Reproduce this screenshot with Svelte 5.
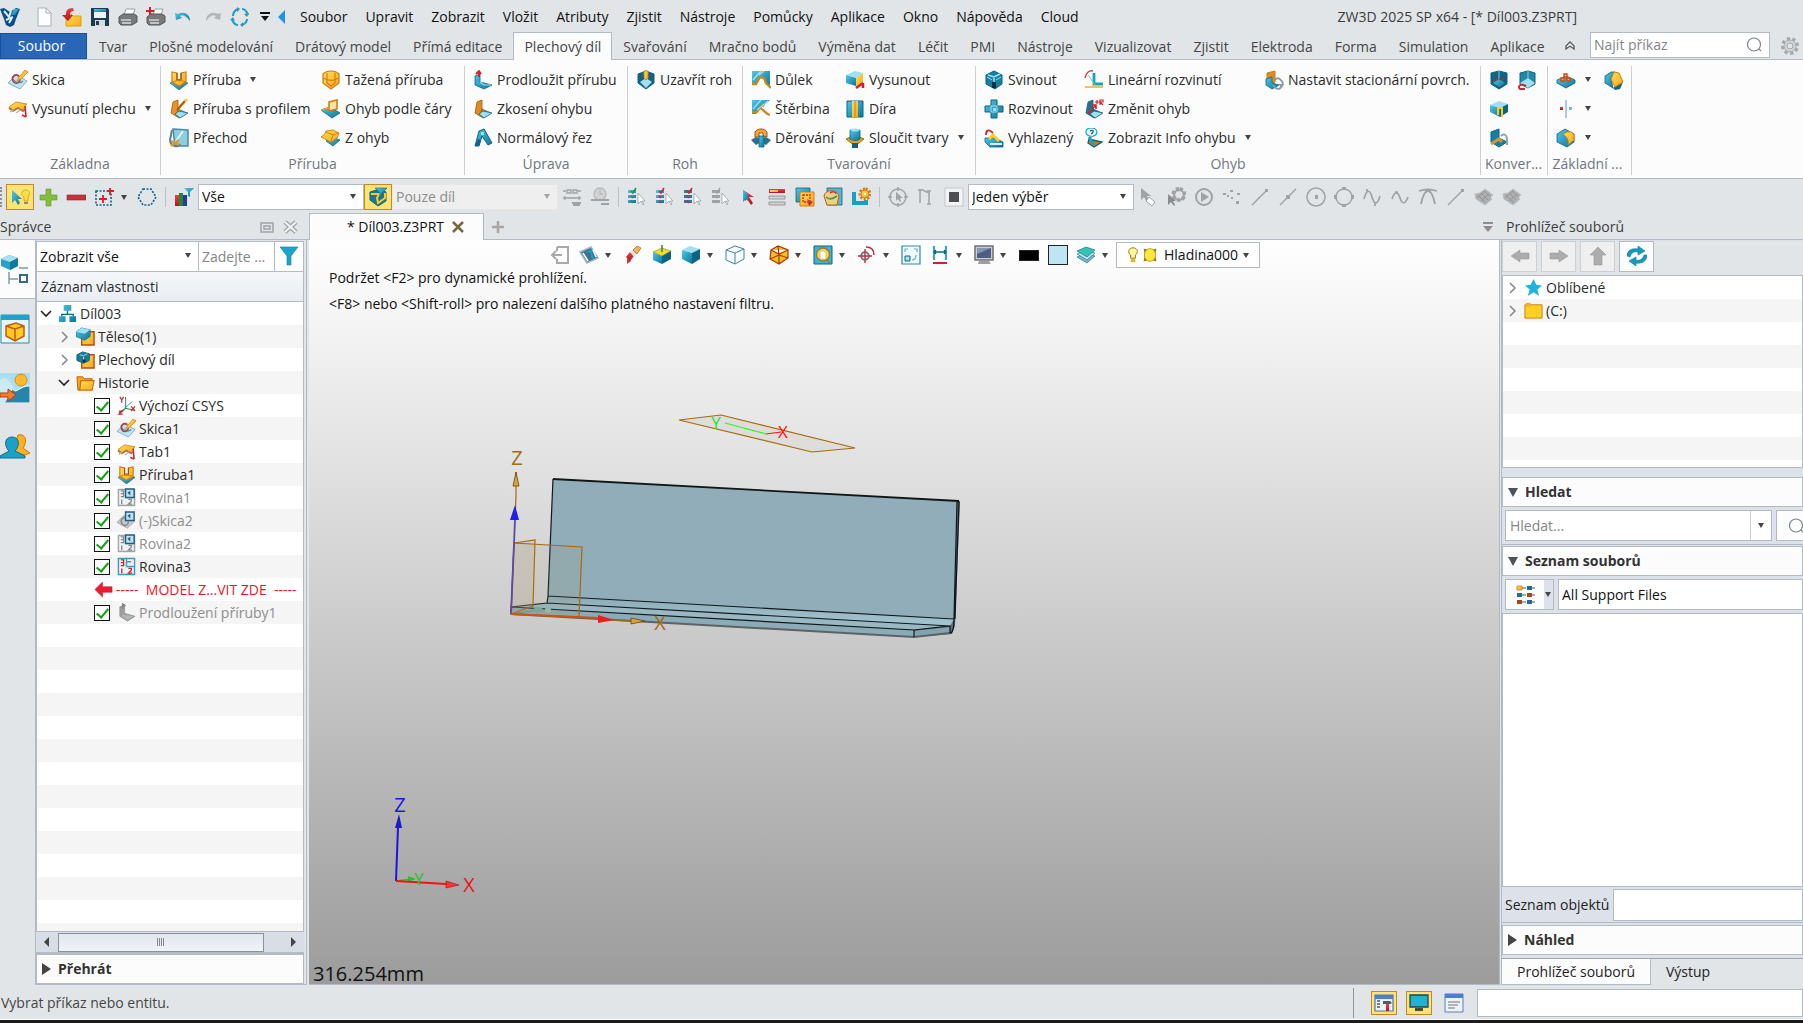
<script>
    // Shared icon colours
    const B = '#189fc8';
    const D = '#0b6486';
    const L = '#9fe0f4';
    const Y = '#ffc926';
    const O = '#d27a12';
    const R = '#d3202b';
    const G = '#a0a2a4';
    const K = '#55595d';
    const W = '#fbfdfe';

    // Flat fills that are drawn with a gradient
    const shades = { [B]: 'url(#blue)', [Y]: 'url(#yellow)', [R]: 'url(#red)' };

    // Each shape: [path, fill, stroke, stroke width]. All icons use a 20x20 box
    const cube = [
        ['M1 5L9 1l10 3-8 4z', L],
        ['M1 5l10 3v11l-10-5z', B],
        ['M11 8l8-4v10l-8 5z', D]
    ];
    const bulletList = (c, d) => [
        ['M1 3h8v3H1zM1 8h8v3H1zM1 13h8v3H1z', c],
        ['M4 4l2 2 3-5M4 9l2 2M4 14l2 2', 'none', d, 1.5],
        ['M11 6v11l3-3 2 4 1-1-2-3h3z', W, G, 0.8]
    ];
    const plane = (a, b) => [
        ['M1.500 1.500h17v17h-17z', '#eef4f6', a, 1.5],
        ['M10 1v9h9M10 5h5', 'none', a, 1.5],
        ['M4 3h3v3H4M7 6v3H4M5 12v5M12 12h3v2l-3 3h4', 'none', b, 1.4]
    ];
    const mesh = [
        ['M1 7l5-1 5-4 8 6-3 2 2 2-7 6L2 12z', '#aeb0b2', '#bcbec0', 1],
        ['M4 8l8 8M7 6l7 7M10 4l7 6M3 11l8-7M7 14l8-7', 'none', '#8f9193', 0.8]
    ];
    const sketch = [
        ['M0 13l8-8 11 6-7 8z', '#bfe4f2', '#7fb4ca', 1],
        ['M11 6c-4-3-8 1-6 5s7 2 7-2', 'none', '#b33a44', 1.6],
        ['M5 9c2 4 7 5 10 2', 'none', '#5f7f92', 1.2],
        ['M9 11l2-4 6-7 3 2-7 7z', Y, O, 0.8]
    ];
    const tab = [
        ['M1 8l7-5 11 2-5 6-5-2-3 3z', Y, O, 0.8],
        ['M1 9l4 3 5-3 5 3 2-2', 'none', '#a9744a', 1.8],
        ['M2 13l3-2M8 14l4-3', 'none', '#c9b8a0', 1.5],
        ['M17 7l1 11M14 16l4 2', 'none', R, 1.6]
    ];
    const flange = [
        ['M1 13l9-4 9 4-9 7z', B, D, 0.6],
        ['M3 2l5 1v7l2 1 2-1V3l5-1v10l-7 4-7-4z', Y, O, 1.2],
        ['M3 12l7-2 7 2', 'none', O, 1],
        ['M8 3v7M12 3v7', 'none', '#8a4a08', 1]
    ];
    const folder = [['M1 4h6l2 2h8v3H6L4 18H2z', '#f0a81e', '#b9600c', 1], ['M5 8h14l-2 10H4z', Y, '#c9700c', 1.2]];
    const lshape = (a, b) => [
        ['M4 3l5-2v9l9 4-8 5-8-5z', a, b, 0.8],
        ['M9 10l-1 4 4 3', 'none', b, 1],
        ['M10 12l9 2-8 5-5-4z', L, D, 0.8]
    ];

    const icons = {
        logo: [['M0 2l4-1 6 4 6-4 4 1-4 10-2 6-4 2-4-2-2-6z', '#0b4d83'], ['M4 4l5 6 2-6M6 13l7-3M9 16l3-5', 'none', '#d5edf8', 2], ['M11 8l3-6 5 0-4 6z', B]],
        page: [['M4 1h8l5 5v13H4z', W, '#a6adb3', 1], ['M12 1v5h5', 'none', '#a6adb3', 1]],
        open: [['M4 7h5l2 2h8v10H4z', Y, '#e0a000', 1], ['M11 1C4 1 4 5 4 8H0l6 6 5-6H8c0-3 1-4 4-4z', R]],
        save: [['M1 1h17l1 2v16H1z', '#1c3a52'], ['M4 2h12v9H4z', '#e9f4f9'], ['M4 2h12v3H4z', B], ['M5 13h10v6H5z', '#d8dde0'], ['M6 14h3v4H6z', '#1c3a52']],
        print: [['M6 8l2-6h9l-2 6z', W, '#9a9c9e', 1], ['M1 10l4-3h11l3 2v6l-5 3H3l-2-2z', '#77797b', '#55585b', 1], ['M3 12h10v2H3z', '#b9bbbd'], ['M4 16h9', 'none', '#dcdedf', 1.5]],
        printAdd: [['M7 8l2-6h8l-2 6z', W, '#9a9c9e', 1], ['M1 10l4-3h11l3 2v6l-5 3H3l-2-2z', '#77797b', '#55585b', 1], ['M3 12h10v2H3z', '#b9bbbd'], ['M4 16h9', 'none', '#dcdedf', 1.5], ['M4 0v8M0 4h8', 'none', R, 2]],
        undo: [['M1 6l1 7 6-2-2-2c3-2 6 0 10 5 0-7-6-10-12-7z', B]],
        redo: [['M19 6l-1 7-6-2 2-2c-3-2-6 0-10 5 0-7 6-10 12-7z', '#b3b6b9']],
        cycle: [['M3 9c0-4 3-7 6-7M12 2c3 0 5 3 6 6M17 12c0 3-3 6-6 6M8 18c-3 0-5-3-6-5', 'none', B, 2], ['M7 0l3 2-3 3zM19 6l-2 4-3-3zM13 20l-3-2 3-3z M0 13l3-3 2 4z', '#3c93b0']],
        sketch,
        tab,
        flange,
        profileFlange: [...lshape('#e99528', '#a05a08'), ['M8 11L16 2', 'none', '#b06010', 2.5], ['M16 2l2-2', 'none', Y, 3]],
        blend: [['M4 1l15 1v16H6z', '#8dcde0', '#4a8ba4', 1.5], ['M5 16L14 3', 'none', '#dff4fa', 2], ['M3 2L1 12c0 6 8 8 10 4', 'none', '#58809a', 2], ['M2 13l8 4M2 18l8-6', 'none', '#d39a3a', 2.2]],
        swept: [['M2 4c4-4 12-4 16 0v9l-8 6-8-6z', Y, O, 1.2], ['M6 3v10l4 3 4-3V3M2 8c5 3 11 3 16 0', 'none', O, 1.1]],
        lineBend: [['M0 11l9-3 10 6-8 5z', B, D, 0.8], ['M8 3l8-2v9l-8 2z', '#ffe4a0', O, 1.6], ['M0 11l8-2', 'none', '#e8a030', 1.6]],
        zBend: [['M5 13l6-4 8 3-7 6z', B, D, 0.8], ['M0 9l4-3 1-3 7-1 6 3-2 5-6 4-4-2z', Y, O, 0.9], ['M5 4l7 3 5-2M12 7l-2 6', 'none', O, 0.9]],
        extend: [['M2 6l5-2v8l12 3-8 4-9-4z', B, D, 0.8], ['M7 12l4 3 7 0', 'none', L, 1.2], ['M6 7V1M3 4l3-3 2 3', 'none', R, 1.8]],
        taper: lshape('#e08a20', '#9c5808'),
        normalCut: [['M2 18L6 3l5-2 8 14-4 2-6-9-3 10z', B, D, 1], ['M2 18l3-7 3 1-2 6z', D], ['M8 4h3v3H8z', L]],
        corner: [['M2 4l8-3 8 3v9l-8 6-8-6z', '#17617e', D, 1], ['M4 12l6-4 6 4-6 6z', L], ['M8 1h4v7l-2 2-2-2z', Y, O, 0.8]],
        dimple: [['M1 1h18v17L10 6 5 13H1z', B], ['M1 14h4l4-7 4 1 2 5 5 5', 'none', '#c48a1a', 2.4], ['M2 10l8-9M8 5l5-4', 'none', L, 1.5]],
        louver: [['M1 1h18L9 10l-4 5H1z', B], ['M1 13h5l5-7 2 1M8 9c4 0 6 6 11 7', 'none', '#c48a1a', 2.2], ['M2 10l8-9M6 11L17 2', 'none', L, 1.2]],
        punch: [['M0 12l5-3 5 2 5-2 5 3-5 5-5-3-5 3z', '#2d6f8c'], ['M4 9V4c2-4 10-4 12 0v5l-4-1V5H8v4z', '#f0a43a', '#a5570c', 1], ['M8 8h5v11H8z', B, D, 0.8]],
        extrude: [['M1 5l9-4 8 2-7 5z', L], ['M1 5l10 3v8L1 13z', B], ['M11 8l7-5v9l-7 5z', Y], ['M11 18l7-5M18 18v-5', 'none', R, 2.5]],
        hole: [['M2 2h16v16H2z', B, D, 1], ['M7 2h6v16H7z', Y], ['M10 2v16', 'none', O, 1]],
        merge: [['M1 11l9-4 9 4-9 7z', '#e6a21e', '#a9690c', 1], ['M5 2h10v9c-3 2-7 2-10 0z', B, D, 0.8], ['M7 15h6v5H7z', D], ['M5 2c3-2 7-2 10 0-3 2-7 2-10 0z', L]],
        fold: [['M2 5l8-4 8 4v9l-7 5-9-5z', '#17809f', D, 1], ['M4 5l6 2 6-3M10 8v4', 'none', L, 1.5], ['M3 7l5 3M17 7l-5 3', 'none', L, 1], ['M8 12h4v6H8z', '#0b3040']],
        unfold: [['M7 1h6v6h6v6h-6v6H7v-6H1V7h6z', B, D, 1], ['M7 7h6v6H7z', 'none', L, 1], ['M9 9h3v3H9z', L]],
        flatten: [['M1 10h10l8 4v5H6l-5-5z', B, D, 0.8], ['M5 11l4-4 6 6', 'none', Y, 3], ['M9 5C4 0 2 3 2 7', 'none', R, 1.8], ['M6 16h12', 'none', '#dfe9ee', 2]],
        linear: [['M10 3v11h9', 'none', B, 2.8], ['M1 17h18', 'none', '#f0c060', 2], ['M9 1C5 0 2 3 1 8', 'none', '#c44a50', 1.5], ['M4 5l7 10', 'none', '#a0b6c0', 1]],
        changeBend: [...lshape('#2a728f', D), ['M4 15l8-9M8 6h4v4', 'none', R, 1.6], ['M11 3h4M13 1v4M16 6V1h3v2h-3l3 3', 'none', R, 1.2]],
        bendInfo: [['M7 0c8 0 7 8 2 8l-3 2V8C0 7 1 0 7 0z', '#e8f6fc', B, 1.2], ['M6 3c3-2 5 1 1 3', 'none', D, 1.2], ['M5 11l4 1 9 2-8 5-6-4z', '#c87a1c', D, 1.3], ['M5 9l5 8', 'none', B, 2.5]],
        stationary: [['M3 3l8-2v11l-8 3z', '#e08a20', O, 1], ['M2 9l6-2v6l7 2-7 4-6-4z', B, D, 0.8], ['M11 10c3-4 7 0 8 4M9 15c3 5 8 5 8 1', 'none', '#8b9aa2', 1.8], ['M14 14h6l-2 4z', '#8b9aa2']],
        convA: [['M2 3l8-2 8 2v11l-8 5-8-5z', '#17617e', D, 1], ['M4 13l6-4 6 4-6 4z', B], ['M10 1v8', 'none', L, 0.8], ['M4 10l12-1', 'none', R, 1.4, '2 1']],
        convB: [['M3 3l8-2 7 2v11l-7 4-8-4z', '#2387a5', D, 1], ['M3 13l8-5 7 5-7 5z', L], ['M11 1v7', 'none', L, 0.8], ['M8 19H3c-3-3 1-6 6-3', 'none', R, 1.8]],
        convC: [['M1 6l9-4 9 3-8 4z', L], ['M1 6l10 3v9L1 13z', B], ['M11 9l8-4v8l-8 5z', D], ['M9 16V9h4v9', 'none', Y, 2]],
        convD: [['M2 4l8-3v9l8 4-8 5-8-5z', '#17809f', D, 1], ['M2 16l8-5 3 3', 'none', '#d9943a', 3], ['M12 8c3-3 6-1 6 3v6', 'none', '#8da6b1', 2]],
        bumps: [['M1 10l9-4 9 4v3l-9 5-9-5z', B, D, 0.8], ['M5 8h3v3H5zM11 8h3v3h-3zM8 4h3v3H8z', Y, '#d04a10', 1.4]],
        mirrorPts: [['M10 1v18', 'none', '#7fb9d3', 1.4], ['M4 8h3v3H4z', R], ['M13 8h3v3h-3z', '#6fc0da']],
        chamfer: [['M1 6l6-4 4 0-4 7 2 9-8-5z', B, D, 0.8], ['M9 18l10-6-3 7-5 1z', D], ['M10 2l5 1 4 9-8 5-4-8z', Y, O, 1]],
        fillet: [['M1 6l8-5 9 5v8l-7 5-10-5z', B, D, 0.8], ['M7 6c6-4 10-2 11 1v5l-6 5c1-5-1-8-5-11z', Y, O, 1]],
        // selection toolbar
        pick: [['M2 3v13l3-3 3 5 2-2-2-4h4z', B], ['M13 4c4-3 9 1 5 6v4h-4v-4c-3-2-3-4-1-6z', '#ffdf45', '#c99a20', 0.8], ['M14 16h4', 'none', '#888', 2]],
        plus: [['M8 2h5v6h6v5h-6v6H8v-6H2V8h6z', '#86bd3e', '#5f9723', 0.6]],
        minus: [['M1 8h19v5H1z', '#c9323a', '#951f27', 0.6]],
        boxAdd: [['M2 4h15v14H2z', 'none', D, 1.6, '2 1.500'], ['M9 8v8M5 12h8M16 1v7M13 4h7', 'none', R, 1.8]],
        lasso: [['M6 2h8l5 8-5 8H6l-5-8z', 'none', D, 1.6, '2 1.500']],
        histogram: [['M1 8h4v11H1z', R], ['M5 6h4v13H5z', '#1f8a34'], ['M9 8h4v11H9z', '#203c9e'], ['M10 1h10l-4 4v5l-2-1V5z', B]],
        partFilter: [['M2 5l10-3 6 3v9l-8 5-8-6z', '#1b7894', D, 1], ['M3 7h8l-2 4 1 5 7-5V6', 'none', Y, 2], ['M7 1h12l-5 5v4l-2-1V6z', B, D, 0.6]],
        refDim: [['M1 4h3M5 3h4v3H5zM11 3h4v3h-4zM15 4h4M1 11h18M3 9v4M17 9v4', 'none', G, 1.3], ['M10 16h9M11 18h7', 'none', G, 2]],
        refClock: [['M10 1a6 6 0 100 12 6 6 0 000-12M10 3v4h3', '#d1d3d5', '#b7b9bb', 1.3], ['M1 13h18M11 17h8', 'none', G, 2]],
        listOk: bulletList(B, '#1b9b3c'),
        listRed: bulletList(B, R),
        listBoth: bulletList('#31789a', R),
        listGray: bulletList(G, G),
        cursor: [['M4 3l11 7-5 0 4 6-2 2-4-6-2 2z', R], ['M4 3v12l3-3 2 2V7z', B]],
        menuList: [['M2 2h16v4H2z', R], ['M3 3h8v2H3z', Y], ['M2 9h16v3H2zM2 15h16v3H2z', '#d2d4d6', '#888', 0.8]],
        copyPick: [['M1 1h14v14H1z', B, D, 0.8], ['M5 5h14v14H5z', Y, O, 1], ['M8 8h7v7H8z', 'none', R, 1.3, '2 1'], ['M12 12l6 3-4 4z', R]],
        handPick: [['M4 1h15v17H4z', '#5fb2cc', D, 0.8], ['M1 9c1-7 13-7 15 0l-2 9H4z', '#f3cf83', '#a5691b', 1], ['M3 10c3 3 7 2 11-1', 'none', '#3e9a4c', 1.6], ['M7 6c2-2 6-1 6 1', 'none', R, 1.2]],
        gearPick: [['M3 5v11h12v-3', 'none', B, 4], ['M14 2a5 5 0 100 10 5 5 0 000-10', 'none', O, 3, '2 1.500'], ['M14 3a4 4 0 100 8 4 4 0 000-8', Y, O, 1], ['M13 6h2v2h-2z', W]],
        circleCursor: [['M10 2a8 8 0 100 16 8 8 0 000-16M10 0v4M10 16v4M0 10h4M16 10h4', 'none', G, 1.5], ['M8 5v9l2-2 2 3 1-1-1-3h3z', G]],
        polyPts: [['M4 16V3c4-2 6 4 9 2v12M2 3h4M11 4h4M11 17h4', 'none', G, 1.5]],
        square: [['M1 1h18v18H1z', '#f3f4f5', '#c3c5c7', 1], ['M5 5h10v10H5z', '#4d4f52']],
        cursorTag: [['M3 1v12l3-3 3 5 2-1-2-5h4z', G], ['M11 10l6 5-3 4-6-5z', W, G, 1]],
        gearCursor: [['M13 2a5 5 0 100 11 5 5 0 000-11', 'none', G, 4, '3 2'], ['M13 3a5 5 0 100 10 5 5 0 000-10', 'none', G, 2], ['M2 7v11l3-3 3 4 1-1-2-4h3z', '#8a8c8e']],
        play: [['M10 2a8 8 0 100 16 8 8 0 000-16z', 'none', G, 2], ['M7 5l8 5-8 5z', G]],
        dots: [['M1 6h3v2H1zM8 3h3v2H8zM15 6h3v2h-3zM9 10h2v2H9zM5 8h2v2H5zM14 14h3v3h-3z', G]],
        lineEnd: [['M2 18L17 3', 'none', G, 1.5], ['M15 2h3v3h-3z', G]],
        lineMid: [['M2 18L18 2', 'none', G, 1.5], ['M8 8h4v4H8z', G]],
        circleDot: [['M10 1a9 9 0 100 18 9 9 0 000-18z', 'none', G, 1.5], ['M9 8h3v4H9z', G]],
        circlePts: [['M10 2a8 8 0 100 16 8 8 0 000-16z', 'none', G, 1.5], ['M8 0h4v3H8zM8 17h4v3H8zM0 8h3v4H0zM17 8h3v4h-3z', G]],
        wave: [['M2 12c3-11 6-9 8-2s5 9 8-1M5 2v3M13 16v3', 'none', G, 1.7]],
        spline: [['M2 12c3-9 6-7 8-1s5 7 8-1M5 5h3', 'none', G, 1.7]],
        tangent: [['M1 4c6-2 12-2 18 0M3 17C5 7 8 4 10 4s5 3 7 13', 'none', G, 1.8]],
        mesh,
        // view toolbar
        exit: [['M7 2h11v16H7v-4M7 6V2M2 10h10M6 6l-4 4 4 4', 'none', '#a9a9a9', 2]],
        orient: [['M1 7l11-5 7 11-11 5z', '#416f8c', '#9ab6c4', 1.5], ['M4 8l5 8M14 5l3 7', 'none', '#fff', 1.5], ['M8 7l4-1 1 6 2 1', 'none', B, 2]],
        eraser: [['M4 13l4 3-4 3z', '#d8323c'], ['M3 12l4-5 4 4-4 5z', R], ['M7 7l3-2 4 3-3 4z', '#ddd'], ['M10 5l4-4 4 2-4 6z', '#e8b85a', '#a9722a', 0.8]],
        cubeTop: [['M1 7l9-4 9 3-9 5z', '#f5dc28', '#97882a', 0.6], ['M1 7l9 4v8l-9-4z', B], ['M10 11l9-5v8l-9 5z', D], ['M10 0v7', 'none', '#2e8d34', 1.5]],
        cube,
        wireCube: [['M1 5l9-4 9 3v10l-9 5-9-4zM1 5l9 3 9-4M10 8v11', '#f7fbfd', '#3d87a5', 1]],
        poly: [['M2 5l7-4 10 4v8l-9 6-9-5zM2 5l8 4 9-4M10 10L9 1M10 10v9M10 10l9 3M10 10l-9 4', '#fdbd17', '#a83808', 1.2]],
        zoomDoc: [['M1 1h18v18H1z', '#3fb3d7', D, 1], ['M10 3a6 6 0 100 13 6 6 0 000-13M14 15l4 4', '#ffd84c', '#9b7a28', 1.4], ['M7 6h4l2 2v6H7z', W, '#c4a860', 0.6]],
        target: [['M1 11h14M8 4v14M8 7a4 4 0 100 8 4 4 0 000-8', 'none', R, 1.4], ['M5 8h6v6H5z', 'none', '#3b93b5', 1], ['M9 2c5 0 8 3 8 8', 'none', '#b3313e', 1.5]],
        fit: [['M1 1h18v18H1z', '#f1fbff', '#2d87a5', 1.2], ['M4 11h5v5H4z', '#a9dff0', D, 1], ['M4 7V4h3M13 4h3v3M15 10c0 3-1 5-4 5', 'none', '#5eb5cc', 1.2]],
        dimension: [['M4 1v14M16 1v14', 'none', B, 1.8], ['M4 7h12M6 5L4 7l2 2M14 5l2 2-2 2', 'none', D, 1.3], ['M3 18h14', 'none', R, 2]],
        monitor: [['M1 1h18v14H1z', '#c9ccd0', '#6e7074', 1.5], ['M3 3h14v10H3z', '#4b5f83'], ['M3 3h14l-14 6z', '#8496b4'], ['M5 16h10l2 3H4z', '#9d9fa1']],
        layers: [['M1 12l9-4 9 3-8 7z', '#82b7cb', D, 0.6], ['M1 9l9-4 9 3-8 7z', '#b9e9ee', D, 0.6], ['M1 6l9-4 9 3-8 7z', '#35c3b5', D, 0.6]],
        bulb: [['M10 1c6 0 7 6 3 9v4H7v-4C3 7 4 1 10 1z', '#fff6a0', '#8c7a1a', 1.2], ['M7 15h6v4H7z', '#d8c02c']],
        sun: [['M2 2l4 1 8 0 4-1-1 5v6l1 5-4-1H6l-4 1 1-5V7z', '#8a7c1c'], ['M10 2a7 8 0 100 16 7 8 0 000-16z', '#ffe83a', '#b59a12', 1]],
        // trees
        root: [['M6 1h8v6H6zM1 13h7v6H1zM12 13h7v6h-7z', B], ['M10 7v4M4 13v-2h12v2', 'none', D, 1.4]],
        body: [['M8 5h11v14H6v-6z', Y, '#b94b14', 1.5], ['M0 5l6-4 9 2v7l-6 4-9-4z', B, D, 0.6], ['M0 5l9 2 6-4-9-2z', L]],
        sheet: [['M8 5h11v14H6v-6z', Y, '#b94b14', 1.5], ['M1 5l6-3 7 2v7l-6 3-7-3z', '#1f7996', D, 1], ['M4 5l4 1 4-2M8 7v4', 'none', L, 1], ['M7 10h3v3H7z', '#0b3040']],
        folder,
        csys: [['M9 1v12l9 2M9 13l-7 5', 'none', '#2c9058', 1.3], ['M3 1l2 3 2-3M5 4v3M2 16h4l-4 3h4M15 11l4 5M19 11l-4 5', 'none', R, 1.3], ['M9 3v8M9 12l7-6', 'none', '#4b9dbb', 1]],
        planeGray: [...plane(G, '#85878a'), ['M9 1h9v9H9z', '#c6e0ec', '#1f5f84', 1.5], ['M14 3v5l-3-3z', '#1f5f84']],
        planeRed: plane('#3f9bbb', R),
        sketchGray: [['M0 12l7-7 12 5-8 8z', '#c6c8ca', G, 1], ['M11 8c-4-3-8 1-6 5s7 2 7-2', 'none', '#85878a', 1.4], ['M9 1h9v9H9z', '#c6e0ec', '#1f5f84', 1.5], ['M14 3v5l-3-3z', '#1f5f84']],
        stop: [['M1 10l8-8v5h10v6H9v5z', '#ec1c30', '#b80f20', 0.5]],
        extendGray: [['M3 4l5-2v9l11 3-8 5-8-5z', '#9c9ea0', '#8b8d8f', 0.8], ['M6 12l12 2-7 4-6-4z', '#b4b6b8'], ['M6 6V1l3 2', 'none', '#7d7f81', 1.4]],
        filter: [['M1 1h18l-7 9v9H8v-9z', '#18a6d0', '#0d7ea2', 0.6]],
        left: [['M1 10l9-6v3h9v6h-9v3z', '#adadad', '#8f8f8f', 0.5]],
        right: [['M19 10l-9-6v3H1v6h9v3z', '#adadad', '#8f8f8f', 0.5]],
        up: [['M10 1l8 8h-4v10H6V9H2z', '#adadad', '#8f8f8f', 0.5]],
        refresh: [['M0 10c0-6 5-8 11-7V0l7 5-7 4V6C7 5 4 7 3 11zM20 9c0 6-5 9-11 8v3l-7-5 7-4v3c4 1 7-1 8-5z', '#149abf', '#0b7c9c', 0.6]],
        star: [['M10 1l3 6 6 1-5 4 2 7-6-4-6 4 2-7-5-4 6-1z', '#1fb4dc']],
        drive: [['M1 4h18v14H1z', '#ffd024', O, 1], ['M2 2h5v4H2z', '#f0b030']],
        grid: [['M2 1h5v4H2z', Y, O, 0.8], ['M12 1h5v4h-5zM2 8h5v4H2zM12 15h5v4h-5z', '#1f6f93'], ['M12 8h5v4h-5zM2 15h5v4H2z', '#a54820'], ['M7 3h4M7 10h4M7 17h4M17 3h3M17 10h3M17 17h3', 'none', K, 1]],
        lens: [['M9 3a6 6 0 100 13 6 6 0 000-13zM14 14l2 2', 'none', '#7d848b', 1.2]],
        gear: [['M10 3a7 7 0 100 14 7 7 0 000-14z', 'none', '#a5a7a9', 4, '3 2.500'], ['M10 4a6 6 0 100 12 6 6 0 000-12zM10 7a3 3 0 110 6 3 3 0 010-6', '#d2d4d6', '#a5a7a9', 1]],
        collapse: [['M6 10l4-4 4 4v3l-4-3-4 3z', W, K, 1.3]],
        layout: [['M1 2h18v16H1z', '#eef3fa', '#4a74b8', 1.2], ['M1 2h18v4H1z', '#4a7fd0'], ['M3 8h3M3 11h3M3 14h3', 'none', K, 1.3], ['M9 8h7l2 2-2 1H9z', K], ['M12 11h3v7h-3z', R]],
        screen: [['M1 2h18v12H1z', '#22b0d4', '#26424e', 1.3], ['M6 15h8v3H6z', '#4e4a3a']],
        textWin: [['M1 1h18v18H1z', '#eef1f6', '#5b7fbd', 1], ['M1 1h18v4H1z', '#4a7fd0'], ['M4 9h12M4 12h10M4 15h7', 'none', '#9a9da2', 1.6]]
    };

    const quick = ['page', 'open', 'save', 'print', 'printAdd', 'undo', 'redo', 'cycle'];
    const menus = ['Soubor', 'Upravit', 'Zobrazit', 'Vložit', 'Atributy', 'Zjistit', 'Nástroje', 'Pomůcky', 'Aplikace', 'Okno', 'Nápověda', 'Cloud'];
    const tabs = ['Tvar', 'Plošné modelování', 'Drátový model', 'Přímá editace', 'Plechový díl', 'Svařování', 'Mračno bodů', 'Výměna dat', 'Léčit', 'PMI', 'Nástroje', 'Vizualizovat', 'Zjistit', 'Elektroda', 'Forma', 'Simulation', 'Aplikace'];
    let activeTab = $state('Plechový díl');

    // Ribbon groups; every column holds up to three commands: [icon, label, has menu]
    const groups = [
        { id: 'base', name: 'Základna', cols: [[['sketch', 'Skica'], ['tab', 'Vysunutí plechu', true]]] },
        { id: 'flange', name: 'Příruba', cols: [
            [['flange', 'Příruba', true], ['profileFlange', 'Příruba s profilem'], ['blend', 'Přechod']],
            [['swept', 'Tažená příruba'], ['lineBend', 'Ohyb podle čáry'], ['zBend', 'Z ohyb']]
        ] },
        { id: 'edit', name: 'Úprava', cols: [[['extend', 'Prodloužit přírubu'], ['taper', 'Zkosení ohybu'], ['normalCut', 'Normálový řez']]] },
        { id: 'corner', name: 'Roh', cols: [[['corner', 'Uzavřít roh']]] },
        { id: 'form', name: 'Tvarování', cols: [
            [['dimple', 'Důlek'], ['louver', 'Štěrbina'], ['punch', 'Děrování']],
            [['extrude', 'Vysunout'], ['hole', 'Díra'], ['merge', 'Sloučit tvary', true]]
        ] },
        { id: 'bend', name: 'Ohyb', cols: [
            [['fold', 'Svinout'], ['unfold', 'Rozvinout'], ['flatten', 'Vyhlazený']],
            [['linear', 'Lineární rozvinutí'], ['changeBend', 'Změnit ohyb'], ['bendInfo', 'Zobrazit Info ohybu', true]],
            [['stationary', 'Nastavit stacionární povrch.']]
        ] },
        { id: 'convert', name: 'Konver...', cols: [[['convA', ''], ['convC', ''], ['convD', '']], [['convB', '']]] },
        { id: 'basic', name: 'Základní ...', cols: [[['bumps', '', true], ['mirrorPts', '', true], ['fillet', '', true]], [['chamfer', '']]] }
    ];

    const pickTools = ['listOk', 'listRed', 'listBoth', 'listGray', 'cursor', 'menuList', 'copyPick', 'handPick', 'gearPick'];
    const snapTools = ['cursorTag', 'gearCursor', 'play', 'dots', 'lineEnd', 'lineMid', 'circleDot', 'circlePts', 'wave', 'spline', 'tangent', 'lineEnd', 'mesh', 'mesh'];

    // View toolbar: [icon, has menu]
    const viewTools = [['exit'], ['orient', true], ['eraser'], ['cubeTop'], ['cube', true], ['wireCube', true], ['poly', true], ['zoomDoc', true], ['target', true], ['fit'], ['dimension', true], ['monitor', true]];

    let history = $state([
        { icon: 'csys', label: 'Výchozí CSYS', on: true },
        { icon: 'sketch', label: 'Skica1', on: true },
        { icon: 'tab', label: 'Tab1', on: true },
        { icon: 'flange', label: 'Příruba1', on: true },
        { icon: 'planeGray', label: 'Rovina1', on: true, dim: true },
        { icon: 'sketchGray', label: '(-)Skica2', on: true, dim: true },
        { icon: 'planeGray', label: 'Rovina2', on: true, dim: true },
        { icon: 'planeRed', label: 'Rovina3', on: true },
        { icon: 'stop', label: 'MODEL Z...VIT ZDE', stop: true },
        { icon: 'extendGray', label: 'Prodloužení příruby1', on: true, dim: true }
    ]);
</script>

{#snippet icon(name)}
    <svg class="icon" viewBox="0 0 20 20" aria-hidden="true">
        {#each icons[name] as [d, fill, stroke, width, dash]}
            <path {d} fill={shades[fill] ?? fill} {stroke} stroke-width={width} stroke-dasharray={dash} />
        {/each}
    </svg>
{/snippet}

{#snippet chevron(open)}
    <svg class="chevron" viewBox="0 0 12 12" aria-hidden="true">
        <path d={open ? 'M1 3l5 5 5-5' : 'M4 1l5 5-5 5'} fill="none" stroke={open ? '#222' : '#8a8a8a'} stroke-width="1.6" />
    </svg>
{/snippet}

<!-- gradients shared by all icons -->
<svg class="defs" aria-hidden="true">
    <defs>
        <linearGradient id="blue" x1="0" y1="0" x2="1" y2="1">
            <stop offset="0" stop-color="#4fc8e8" /><stop offset="1" stop-color="#0d7598" />
        </linearGradient>
        <linearGradient id="yellow" x1="0" y1="0" x2="1" y2="1">
            <stop offset="0" stop-color="#ffdf55" /><stop offset="1" stop-color="#f7a81c" />
        </linearGradient>
        <linearGradient id="red" x1="0" y1="0" x2="0" y2="1">
            <stop offset="0" stop-color="#e8424a" /><stop offset="1" stop-color="#b3141e" />
        </linearGradient>
    </defs>
</svg>

<div class="app">
    <header class="title-bar">
        <span class="logo">{@render icon('logo')}</span>
        {#each quick as name}
            <button class="tool" aria-label={name}>{@render icon(name)}</button>
        {/each}
        <button class="more" aria-label="more"><i class="bar"></i><i class="caret"></i></button>
        <i class="back"></i>
        <nav>
            {#each menus as menu}
                <button class="menu">{menu}</button>
            {/each}
        </nav>
        <span class="window-title">ZW3D 2025 SP x64 - [* Díl003.Z3PRT]</span>
    </header>

    <div class="tab-row">
        <button class="file-tab">Soubor</button>
        {#each tabs as tab}
            <button class="tab" class:active={tab === activeTab} onclick={() => (activeTab = tab)}>{tab}</button>
        {/each}
        <button class="collapse" aria-label="collapse">{@render icon('collapse')}</button>
        <label class="find">
            <input type="text" placeholder="Najít příkaz" aria-label="Najít příkaz" />
            {@render icon('lens')}
        </label>
        <button class="gear" aria-label="settings">{@render icon('gear')}</button>
    </div>

    <div class="ribbon">
        {#each groups as group}
            <section class="group {group.id}">
                <div class="cols">
                    {#each group.cols as col}
                        <div class="col">
                            {#each col as [name, label, more]}
                                <button class="command" aria-label={label || name}>
                                    {@render icon(name)}
                                    {#if label}<span>{label}</span>{/if}
                                    {#if more}<i class="caret"></i>{/if}
                                </button>
                            {/each}
                        </div>
                    {/each}
                </div>
                <h2>{group.name}</h2>
            </section>
        {/each}
    </div>

    <div class="select-bar">
        <i class="grip"></i>
        <button class="tool lit" aria-label="pick">{@render icon('pick')}</button>
        <button class="tool" aria-label="plus">{@render icon('plus')}</button>
        <button class="tool" aria-label="minus">{@render icon('minus')}</button>
        <button class="tool" aria-label="box">{@render icon('boxAdd')}</button>
        <i class="caret box-caret"></i>
        <button class="tool" aria-label="lasso">{@render icon('lasso')}</button>
        <i class="sep"></i>
        <button class="tool" aria-label="histogram">{@render icon('histogram')}</button>
        <div class="combo"><select aria-label="filter"><option>Vše</option></select></div>
        <button class="tool lit" aria-label="part filter">{@render icon('partFilter')}</button>
        <div class="combo off"><select aria-label="scope" disabled><option>Pouze díl</option></select></div>
        <button class="tool" aria-label="reference">{@render icon('refDim')}</button>
        <button class="tool" aria-label="clock">{@render icon('refClock')}</button>
        <i class="sep"></i>
        {#each pickTools as name}
            <button class="tool" aria-label={name}>{@render icon(name)}</button>
        {/each}
        <i class="sep"></i>
        {#each ['circleCursor', 'polyPts', 'square'] as name}
            <button class="tool" aria-label={name}>{@render icon(name)}</button>
        {/each}
        <div class="combo"><select aria-label="mode"><option>Jeden výběr</option></select></div>
        {#each snapTools as name}
            <button class="tool" aria-label={name}>{@render icon(name)}</button>
        {/each}
    </div>

    <main>
        <aside class="manager">
            <div class="panel-title">
                <span>Správce</span>
                <svg viewBox="0 0 40 14" class="panel-buttons" aria-hidden="true">
                    <path d="M1 3h12v9H1zM4 6h6v3H4z" fill="none" stroke="#a0a4a8" stroke-width="1.5" />
                    <path d="M25 2l11 10M36 2L25 12" stroke="#a0a4a8" stroke-width="4.500" />
                    <path d="M25 2l11 10M36 2L25 12" stroke="#f2f2f2" stroke-width="2" />
                </svg>
            </div>
            <div class="manager-body">
                <div class="strip">
                    <button class="strip-tab on" aria-label="models">
                        <svg viewBox="0 0 30 30">
                            <path d="M1 5l8-4 9 3v8l-8 4-9-4z" fill="#2aa2c8" /><path d="M1 5l8-4 9 3-8 4z" fill="#a6e2f4" /><path d="M10 8l8-4v8l-8 4z" fill="#13789c" />
                            <path d="M19 14h9M9 18v12M9 25h9" fill="none" stroke="#7f98a8" stroke-width="1.5" />
                            <path d="M20 21h7v7h-7z" fill="#fff" stroke="#356b88" stroke-width="2" />
                        </svg>
                    </button>
                    <button class="strip-tab" aria-label="assembly">
                        <svg viewBox="0 0 30 30">
                            <path d="M1 1h28v28H1z" fill="#e6f6fc" stroke="#2a8cb0" /><path d="M1 1h28v5H1z" fill="#1fa3cc" />
                            <path d="M6 12l10-3 8 3v10l-9 5-9-5z" fill="#ffc926" stroke="#c25a10" stroke-width="1.5" />
                            <path d="M6 12l9 3 9-3M15 15v12" fill="none" stroke="#c25a10" stroke-width="1.5" />
                        </svg>
                    </button>
                    <button class="strip-tab" aria-label="visual">
                        <svg viewBox="0 0 30 30">
                            <path d="M0 0h30v30H0z" fill="#a9dff2" /><path d="M0 8c7-6 10 2 13 8s7-4 17-3v17H0z" fill="#2586ab" stroke="#fff" />
                            <path d="M0 8c7-6 10 2 13 8L5 30H0z" fill="#c9ebf6" />
                            <circle cx="21" cy="7" r="6" fill="#ffb92a" stroke="#d98a14" /><path d="M0 20h8v-4l8 6-8 6v-4H0z" fill="#f47b30" stroke="#b8400c" />
                        </svg>
                    </button>
                    <button class="strip-tab" aria-label="roles">
                        <svg viewBox="0 0 30 30">
                            <path d="M18 3c9-2 9 8 5 13l7 5-5 2-13-3z" fill="#ffb020" stroke="#cc7a10" />
                            <path d="M12 5c8 0 8 9 3 14l10 5v2H0v-2l9-5C4 14 4 5 12 5z" fill="#1ba0c8" stroke="#0d6e90" />
                        </svg>
                    </button>
                </div>
                <div class="manager-main">
                    <div class="filters">
                        <div class="combo"><select aria-label="show"><option>Zobrazit vše</option></select></div>
                        <input type="text" placeholder="Zadejte ..." aria-label="Zadejte" />
                        <button class="filter" aria-label="filter">{@render icon('filter')}</button>
                    </div>
                    <div class="tree-head">Záznam vlastnosti</div>
                    <ul class="tree">
                        <li>{@render chevron(true)}{@render icon('root')}<span>Díl003</span></li>
                        <li class="second">{@render chevron(false)}{@render icon('body')}<span>Těleso(1)</span></li>
                        <li class="second">{@render chevron(false)}{@render icon('sheet')}<span>Plechový díl</span></li>
                        <li class="second">{@render chevron(true)}{@render icon('folder')}<span>Historie</span></li>
                        {#each history as item}
                            <li class="third" class:dim={item.dim} class:stop={item.stop}>
                                {#if item.stop}
                                    {@render icon(item.icon)}<span>----- &nbsp;{item.label} &nbsp;-----</span>
                                {:else}
                                    <label><input type="checkbox" bind:checked={item.on} />{@render icon(item.icon)}<span>{item.label}</span></label>
                                {/if}
                            </li>
                        {/each}
                    </ul>
                    <div class="scrollbar"><i class="tri-left"></i><div class="thumb"><i></i></div><i class="tri-right"></i></div>
                    <button class="section"><i class="tri-right"></i>Přehrát</button>
                </div>
            </div>
        </aside>

        <section class="document">
            <div class="doc-tabs">
                <button class="doc-tab">* Díl003.Z3PRT
                    <svg viewBox="0 0 12 12"><path d="M1 1l10 10M11 1L1 11" stroke="#7c6840" stroke-width="2.500" /></svg>
                </button>
                <button class="new-tab" aria-label="new">
                    <svg viewBox="0 0 12 12"><path d="M6 0v12M0 6h12" stroke="#a9a5a5" stroke-width="2.500" /></svg>
                </button>
                <button class="doc-list" aria-label="documents">
                    <svg viewBox="0 0 12 12"><path d="M1 1h10v2H1zM1 5h10l-5 6z" fill="#918c8c" /></svg>
                </button>
            </div>
            <div class="viewport">
                <svg class="scene" role="img" aria-label="model">
                    <defs>
                        <linearGradient id="bend" x1="0" y1="0" x2="0" y2="1">
                            <stop offset="0" stop-color="#8cabb7" /><stop offset="1" stop-color="#a4c5d2" />
                        </linearGradient>
                    </defs>
                    <g transform="translate(-309 -240)" fill="none" stroke-width="1.200">
                        <path d="M679 420l42-5 134 33-43 4z" fill="#deddda" stroke="#a8690e" />
                        <path d="M725 423l41 11" stroke="#1eff1e" /><path d="M766 434l15-2" stroke="#f11" />
                        <!-- sheet metal part -->
                        <path d="M553 479l404 22-3 118-406-23z" fill="#91adb9" />
                        <path d="M548 596l406 23-4 7-403-23z" fill="url(#bend)" />
                        <path d="M547 603l405 23-38 4-403-23z" fill="#9ab8c4" />
                        <path d="M511 607l403 23v7l-403-23z" fill="#8babb8" />
                        <path d="M914 630l36-4 4-7 3-118 3 1-5 124-3 8-38 3z" fill="#58717d" />
                        <path d="M914 631l36-4v6l-36 4z" fill="#85a3af" />
                        <path d="M511 614l403 23 36-4" stroke="#5d6265" stroke-width="2" />
                        <path d="M553 479l-5 117-1 7-36 4v7M548 596l406 23M547 603l403 23M511 607l403 23v7M914 630l36-4v7q4 0 4-14l3-118M955 619l4-118" stroke="#101719" />
                        <path d="M553 479l406 22" stroke="#101719" stroke-width="1.800" />
                        <!-- datum planes and axes -->
                        <path d="M514 543l21-3-2 66-22 8z" fill="#bba58b" fill-opacity="0.220" stroke="#a8690e" />
                        <path d="M514 543l68 4-3 70-68-3z" fill="#9a9862" fill-opacity="0.120" stroke="#a8690e" />
                        <path d="M516 472v24l-1 24" stroke="#a8690e" /><path d="M515 520l-4 94" stroke="#5b4aa8" stroke-width="1.800" />
                        <path d="M516 472l-3 14h6z" fill="#d4a53b" stroke="#6b430a" stroke-width="0.800" />
                        <path d="M515 505l-5 15h9z" fill="#2020ee" />
                        <path d="M511 614l27-4" stroke="#53a96b" /><ellipse cx="538" cy="610" rx="5" ry="3" fill="#79a996" /><circle cx="548" cy="610" r="3" fill="#9db49f" />
                        <path d="M511 614l88 4" stroke="#d6510c" stroke-width="2" /><path d="M612 620l20 1" stroke="#a8690e" stroke-width="1.500" />
                        <path d="M598 615l16 5-16 3z" fill="#ee1c1c" /><path d="M631 618l14 3-14 3z" fill="#dca33a" stroke="#6b430a" stroke-width="0.800" />
                        <!-- view triad -->
                        <path d="M396 881l2-54" stroke="#1616e6" stroke-width="2" /><path d="M399 814l-4 14h7z" fill="#1a1ac8" />
                        <path d="M396 881l16-2" stroke="#25c425" stroke-width="1.500" /><path d="M408 876l8 3-8 3z" fill="#25c425" />
                        <path d="M396 881l50 3" stroke="#f01414" stroke-width="2" /><path d="M446 881l13 4-13 3z" fill="#f33" stroke="#911" stroke-width="0.600" />
                    </g>
                    <g class="axis" transform="translate(-309 -240)">
                        <text x="517" y="465" fill="#a8690e">Z</text>
                        <text x="660" y="630" fill="#a8690e">X</text>
                        <text class="small" x="716" y="429" fill="#1ee61e">Y</text>
                        <text class="small" x="783" y="438" fill="#f11">X</text>
                        <text x="400" y="812" fill="#1616e6">Z</text>
                        <text x="469" y="892" fill="#f01414">X</text>
                        <text class="small" x="419" y="885" fill="#25c425">Y</text>
                    </g>
                </svg>
                <div class="view-bar">
                    {#each viewTools as [name, more]}
                        <button class="view-tool" class:with-menu={more} aria-label={name}>{@render icon(name)}{#if more}<i class="caret"></i>{/if}</button>
                    {/each}
                    <button class="swatch black" aria-label="black"></button>
                    <button class="swatch" aria-label="blue"></button>
                    <button class="view-tool with-menu" aria-label="layers">{@render icon('layers')}<i class="caret"></i></button>
                    <button class="layer">{@render icon('bulb')}{@render icon('sun')}<span>Hladina000</span><i class="caret"></i></button>
                </div>
                <p class="hint">Podržet &lt;F2&gt; pro dynamické prohlížení.</p>
                <p class="hint">&lt;F8&gt; nebo &lt;Shift-roll&gt; pro nalezení dalšího platného nastavení filtru.</p>
                <p class="scale">316.254mm</p>
            </div>
        </section>

        <aside class="browser">
            <div class="panel-title">Prohlížeč souborů</div>
            <div class="browser-body">
                <div class="nav-buttons">
                    <button disabled aria-label="back">{@render icon('left')}</button>
                    <button disabled aria-label="forward">{@render icon('right')}</button>
                    <button disabled aria-label="up">{@render icon('up')}</button>
                    <button aria-label="refresh">{@render icon('refresh')}</button>
                </div>
                <ul class="tree folders">
                    <li>{@render chevron(false)}{@render icon('star')}<span>Oblíbené</span></li>
                    <li>{@render chevron(false)}{@render icon('drive')}<span>(C:)</span></li>
                </ul>
                <button class="section"><i class="tri-down"></i>Hledat</button>
                <div class="search-row">
                    <div class="search-box"><input type="text" placeholder="Hledat..." aria-label="Hledat" /><button aria-label="history"><i class="caret"></i></button></div>
                    <button class="search-go" aria-label="search">{@render icon('lens')}</button>
                </div>
                <button class="section second-section"><i class="tri-down"></i>Seznam souborů</button>
                <div class="type-row">
                    <button class="view-mode" aria-label="view"><span>{@render icon('grid')}</span><i class="caret"></i></button>
                    <input type="text" value="All Support Files" aria-label="type" />
                </div>
                <div class="file-list"></div>
                <label class="objects">Seznam objektů<input type="text" /></label>
                <button class="section preview"><i class="tri-right"></i>Náhled</button>
                <div class="bottom-tabs">
                    <button class="on">Prohlížeč souborů</button>
                    <button>Výstup</button>
                </div>
            </div>
        </aside>
    </main>

    <footer>
        <span>Vybrat příkaz nebo entitu.</span>
        <div class="status-tools">
            <button class="tool lit" aria-label="layout">{@render icon('layout')}</button>
            <button class="tool lit" aria-label="screen">{@render icon('screen')}</button>
            <button class="tool" aria-label="text">{@render icon('textWin')}</button>
            <input type="text" aria-label="command" />
        </div>
    </footer>
</div>

<style>
    :global(body) {
        margin: 0;
        overflow: hidden;
    }

    .defs {
        position: absolute;
        width: 0;
        height: 0;
    }

    .app {
        display: flex;
        flex-direction: column;
        height: 100vh;
        background: #e1e5e8;
        color: #2b2b2b;
        font: 14px/20px "Open Sans", "Noto Sans", sans-serif;
        white-space: nowrap;
    }

    .app * {
        box-sizing: border-box;
    }

    button,
    input,
    select {
        margin: 0;
        padding: 0;
        border: 0;
        border-radius: 0;
        background: none;
        color: inherit;
        font: inherit;
        white-space: nowrap;
        outline: none;
    }

    input,
    select {
        color: #111;
    }

    input::placeholder {
        color: #858585;
        opacity: 1;
    }

    .icon {
        flex: none;
        width: 20px;
        height: 20px;
    }

    .caret {
        flex: none;
        width: 0;
        height: 0;
        border: 3px solid transparent;
        border-top: 5px solid #444;
        border-bottom: 0;
    }

    .tool {
        display: flex;
        flex: none;
        align-items: center;
        justify-content: center;
        width: 28px;
        height: 26px;
    }

    .lit {
        border: 1px solid #c08a2c;
        background: #ffe373;
    }

    .sep {
        flex: none;
        width: 1px;
        height: 20px;
        margin: 0 4px;
        background: #bcc1c6;
    }

    /* Title bar */
    .title-bar {
        display: flex;
        flex: none;
        align-items: center;
        height: 32px;
        padding-top: 1px;
    }

    .logo {
        display: flex;
        width: 30px;
        height: 20px;
    }

    .more {
        display: flex;
        flex-direction: column;
        align-items: center;
        gap: 2px;
        width: 22px;
    }

    .more .bar {
        width: 10px;
        height: 2px;
        background: #111;
    }

    .more .caret {
        border-width: 5px 4px 0;
        border-top-color: #111;
    }

    .back {
        margin: 0 15px 0 2px;
        border: 7px solid transparent;
        border-right-color: #1897e0;
        border-left: 0;
    }

    nav {
        display: flex;
        gap: 18px;
    }

    .menu {
        color: #111;
    }

    .window-title {
        margin-left: auto;
        padding-right: 226px;
        color: #3c3c3c;
    }

    /* Ribbon tabs */
    .tab-row {
        display: flex;
        flex: none;
        height: 28px;
        border-bottom: 1px solid #b4bac4;
        color: #454545;
    }

    .file-tab {
        width: 87px;
        margin: 1px 1px 0 0;
        padding-right: 4px;
        border: 1px solid #1c4f9e;
        background: #2a66b8;
        color: #fff;
    }

    .tab {
        height: 28px;
        padding: 0 10px;
        border: 1px solid transparent;
        border-bottom: 0;
    }

    .tab.active {
        border-color: #b4bac4;
        background: #fcfcfc;
    }

    .collapse {
        display: flex;
        align-items: center;
        margin-left: auto;
    }

    .find {
        display: flex;
        align-items: center;
        width: 180px;
        height: 26px;
        margin: 0 10px;
        padding: 0 4px 0 3px;
        border: 1px solid #b4bac4;
        background: #fff;
    }

    .find input {
        flex: 1;
        min-width: 0;
    }

    .gear {
        display: flex;
        align-items: center;
        padding-right: 3px;
    }

    /* Ribbon */
    .ribbon {
        display: flex;
        flex: none;
        height: 119px;
        padding: 6px 0 3px;
        border-bottom: 1px solid #b4bac4;
        background: #fcfcfc;
    }

    .group {
        display: flex;
        flex: none;
        flex-direction: column;
        justify-content: space-between;
        padding-left: 8px;
        border-right: 1px solid #ccd0d4;
    }

    .cols {
        display: flex;
    }

    .command {
        display: flex;
        align-items: center;
        gap: 4px;
        height: 29px;
        padding-bottom: 2px;
    }

    .command .caret {
        margin-left: 5px;
    }

    .group h2 {
        margin: 0 0 1px;
        padding-right: 8px;
        color: #70767e;
        font: inherit;
        text-align: center;
    }

    .base { width: 161px; }
    .flange { width: 304px; }
    .edit { width: 163px; }
    .corner { width: 115px; }
    .form { width: 233px; }
    .bend { width: 505px; }
    .convert { width: 67px; padding-left: 4px; }
    .basic { width: 84px; padding-left: 4px; }
    .flange .col:first-child { width: 152px; }
    .form .col:first-child { width: 94px; }
    .bend .col:first-child { width: 100px; }
    .bend .col:nth-child(2) { width: 180px; }
    .convert .col { width: 28px; padding-left: 4px; }
    .basic .col { padding-left: 4px; }
    .basic .col:first-child { width: 48px; }

    /* Selection toolbar */
    .select-bar {
        display: flex;
        flex: none;
        align-items: center;
        height: 34px;
        padding-top: 2px;
    }

    .grip {
        height: 20px;
        margin-right: 4px;
        border-left: 2px dotted #8b9096;
    }

    .box-caret {
        margin: 0 6px 0 3px;
    }

    .combo {
        position: relative;
        flex: none;
        width: 166px;
        height: 26px;
        border: 1px solid #b4bac4;
        background: #fff;
    }

    .combo::after {
        position: absolute;
        top: 9px;
        right: 7px;
        border: 3px solid transparent;
        border-top: 5px solid #444;
        border-bottom: 0;
        content: "";
        pointer-events: none;
    }

    .combo select {
        width: 100%;
        height: 100%;
        padding: 0 3px;
        appearance: none;
        opacity: 1;
    }

    .combo.off {
        border-color: #e6e6e6;
        background: #efefef;
    }

    .combo.off select {
        color: #8b8b8b;
    }

    .combo.off::after {
        border-top-color: #a5a5a5;
    }

    /* Work area */
    main {
        display: grid;
        flex: 1;
        grid-template-columns: 309px minmax(0, 1fr) 303px;
        min-height: 0;
    }

    .manager,
    .document,
    .browser,
    .manager-main {
        display: flex;
        flex-direction: column;
        min-width: 0;
        min-height: 0;
    }

    .panel-title {
        display: flex;
        flex: none;
        align-items: center;
        justify-content: space-between;
        height: 27px;
        padding-top: 1px;
        border-bottom: 1px solid #b4bac4;
        color: #3c3c3c;
    }

    .panel-buttons {
        width: 40px;
        height: 14px;
        margin-right: 9px;
    }

    .manager-body {
        display: flex;
        flex: 1;
        min-height: 0;
        padding-right: 2px;
    }

    .strip {
        flex: none;
        width: 35px;
    }

    .strip-tab {
        display: flex;
        align-items: center;
        width: 100%;
        height: 59px;
    }

    .strip-tab.on {
        background: #fcfcfc;
        border-bottom: 1px solid #b4bac4;
    }

    .strip-tab svg {
        width: 30px;
        height: 30px;
    }

    .manager-main {
        flex: 1;
        padding: 1px 2px 0 0;
        border: 1px solid #b4bac4;
        border-top: 0;
    }

    .filters {
        display: flex;
        flex: none;
        gap: 1px;
        height: 31px;
        background: #b4bac4;
        border: 1px solid #b4bac4;
    }

    .filters .combo {
        width: 161px;
        height: auto;
        border: 0;
    }

    .filters .combo::after {
        top: 11px;
    }

    .filters input {
        flex: 1;
        min-width: 0;
        padding: 0 3px;
        background: #fff;
    }

    .filter {
        width: 28px;
        padding-top: 4px;
        background: #fff;
    }

    .tree-head {
        flex: none;
        height: 30px;
        padding: 5px 4px;
        border: 1px solid #b4bac4;
        border-top: 0;
        background: linear-gradient(#f5f7f9, #e9edf2);
    }

    .tree {
        flex: 1;
        min-height: 0;
        margin: 0;
        padding: 0;
        border: 1px solid #b4bac4;
        border-top: 0;
        background: repeating-linear-gradient(#fff 0 23px, #f5f5f5 23px 46px);
        list-style: none;
        overflow: hidden;
    }

    .tree li,
    .tree label {
        display: flex;
        align-items: center;
        height: 23px;
    }

    .tree li {
        padding-left: 3px;
    }

    .tree .second {
        padding-left: 21px;
    }

    .tree .third {
        padding-left: 57px;
    }

    .chevron {
        flex: none;
        width: 12px;
        height: 12px;
        margin-right: 6px;
    }

    .tree .icon {
        width: 19px;
        height: 19px;
        margin-right: 3px;
    }

    .tree .dim {
        color: #8d8d8d;
    }

    .tree .stop {
        color: #e8171f;
    }

    .tree input {
        display: flex;
        align-items: center;
        justify-content: center;
        width: 16px;
        height: 16px;
        margin-right: 7px;
        border: 1px solid #111;
        background: #fff;
        appearance: none;
    }

    .tree input:checked::after {
        width: 5px;
        height: 10px;
        margin-bottom: 2px;
        border: solid #10a010;
        border-width: 0 2px 2px 0;
        content: "";
        transform: rotate(40deg);
    }

    .scrollbar {
        display: flex;
        flex: none;
        align-items: center;
        justify-content: space-between;
        height: 22px;
        padding: 1px 8px;
        border-bottom: 2px solid #b4bac4;
        background: #d8dde6;
    }

    .thumb {
        display: flex;
        align-items: center;
        justify-content: center;
        width: 206px;
        height: 19px;
        margin-right: 18px;
        border: 1px solid #8c929a;
        background: linear-gradient(#e2e6ee, #f0f3f8);
    }

    .thumb i {
        width: 8px;
        height: 8px;
        background: repeating-linear-gradient(90deg, #888 0 1px, transparent 1px 2px);
    }

    .tri-left,
    .tri-right {
        border: 5px solid transparent;
        border-right: 5px solid #444;
        border-left: 0;
    }

    .tri-right {
        border-right: 0;
        border-left: 5px solid #444;
    }

    .tri-down {
        border: 5px solid transparent;
        border-top: 9px solid #4d5358;
        border-bottom: 0;
    }

    .section {
        display: flex;
        flex: none;
        align-items: center;
        gap: 7px;
        height: 30px;
        padding-left: 5px;
        border: 1px solid #b4bac4;
        background: #fcfcfc;
        color: #333;
        font-weight: 700;
    }

    .section .tri-right {
        border-width: 6px 0 6px 9px;
    }

    /* Document area */
    .doc-tabs {
        display: flex;
        flex: none;
        align-items: center;
        height: 27px;
        border-bottom: 1px solid #b4bac4;
    }

    .doc-tab {
        display: flex;
        align-items: center;
        justify-content: flex-end;
        gap: 8px;
        width: 175px;
        height: 27px;
        padding-right: 19px;
        border: 1px solid #b4bac4;
        border-bottom: 0;
        background: #fcfcfc;
        color: #111;
    }

    .doc-tabs svg {
        display: block;
        width: 12px;
        height: 12px;
    }

    .new-tab {
        padding: 2px 8px 0;
    }

    .doc-list {
        margin-left: auto;
        padding: 2px 6px 0;
    }

    .viewport {
        position: relative;
        flex: 1;
        border-right: 1px solid #b4bac4;
        border-bottom: 1px solid #b4bac4;
        background: linear-gradient(#fff, #9c9c9c);
        color: #111;
    }

    .scene {
        position: absolute;
        width: 100%;
        height: 100%;
    }

    .axis text {
        font-family: "Open Sans", sans-serif;
        font-size: 20px;
        text-anchor: middle;
    }

    .axis .small {
        font-size: 17px;
    }

    .view-bar {
        position: relative;
        display: flex;
        align-items: center;
        height: 26px;
        margin: 2px 0 0 237px;
    }

    .view-tool {
        display: flex;
        align-items: center;
        gap: 6px;
        width: 29px;
        padding-left: 4px;
    }

    .view-tool.with-menu {
        width: 44px;
    }

    .swatch {
        width: 20px;
        height: 20px;
        margin: 0 4px 0 5px;
        border: 1px solid #222;
        background: #bfe5f4;
    }

    .black {
        height: 11px;
        background: #000;
    }

    .layer {
        display: flex;
        align-items: center;
        width: 144px;
        height: 26px;
        padding: 0 7px 0 8px;
        border: 1px solid #b4bac4;
        background: #fff;
    }

    .layer .icon {
        width: 16px;
        height: 16px;
        margin-right: 1px;
    }

    .layer span {
        margin: 0 5px;
    }

    .hint {
        position: relative;
        margin: 0 0 6px 20px;
    }

    .scale {
        position: absolute;
        bottom: 0;
        left: 4px;
        margin: 0;
        color: #111;
        font-size: 20px;
    }

    /* File browser */
    .browser .panel-title {
        padding-left: 6px;
    }

    .browser-body {
        display: flex;
        flex: 1;
        flex-direction: column;
        min-height: 0;
        margin-left: 1px;
        padding: 1px 0 0;
        border-left: 1px solid #b4bac4;
        background: #dde1e9;
    }

    .nav-buttons {
        display: flex;
        flex: none;
        gap: 4px;
        height: 34px;
        background: #e1e5e8;
    }

    .nav-buttons button {
        width: 35px;
        height: 31px;
        padding-top: 4px;
        border: 1px solid #b4bac4;
        background: #fcfcfc;
    }

    .nav-buttons button:disabled {
        border-color: #ccd0d4;
        background: #efefef;
    }

    .folders {
        flex: none;
        height: 193px;
        margin-bottom: 9px;
        border-top: 1px solid #b4bac4;
    }

    .search-row,
    .type-row {
        display: flex;
        flex: none;
        gap: 4px;
        height: 38px;
        padding: 3px 0 3px 3px;
        border-bottom: 1px solid #b4bac4;
    }

    .search-box {
        display: flex;
        flex: none;
        width: 267px;
        border: 1px solid #b4bac4;
        background: #fff;
    }

    .search-box input {
        flex: 1;
        min-width: 0;
        padding: 0 4px;
    }

    .search-box button {
        display: flex;
        align-items: center;
        padding: 0 7px;
        border-left: 1px solid #ccd0d4;
    }

    .search-go {
        display: flex;
        flex: none;
        align-items: center;
        width: 60px;
        padding-left: 10px;
        border: 1px solid #b4bac4;
        background: #fcfcfc;
    }

    .second-section {
        margin-top: 1px;
    }

    .view-mode {
        display: flex;
        align-items: center;
        justify-content: space-between;
        width: 49px;
        padding-right: 2px;
        border: 1px solid #b4bac4;
    }

    .view-mode span {
        display: flex;
        align-items: center;
        justify-content: center;
        width: 38px;
        height: 100%;
        background: #fcfcfc;
    }

    .type-row input {
        flex: 1;
        min-width: 0;
        padding: 0 3px;
        border: 1px solid #b4bac4;
        background: #fff;
    }

    .file-list {
        flex: 1;
        border: 1px solid #b4bac4;
        border-top: 0;
        background: #fff;
    }

    .objects {
        display: flex;
        flex: none;
        align-items: center;
        gap: 4px;
        height: 36px;
        padding-left: 3px;
        border-bottom: 1px solid #b4bac4;
        color: #222;
    }

    .objects input {
        flex: 1;
        min-width: 0;
        height: 32px;
        border: 1px solid #b4bac4;
        background: #fff;
    }

    .preview {
        margin: 2px 0 3px;
    }

    .bottom-tabs {
        display: flex;
        flex: none;
        height: 27px;
        margin-left: -1px;
        border-top: 1px solid #a0a5ab;
        background: #e1e5e8;
        color: #222;
    }

    .bottom-tabs button {
        padding: 0 15px;
    }

    .bottom-tabs .on {
        border: 1px solid #b4bac4;
        border-top: 0;
        background: #fcfcfc;
    }

    /* Status bar */
    footer {
        display: flex;
        flex: none;
        align-items: center;
        justify-content: space-between;
        height: 38px;
        padding: 1px 0 0 1px;
        border-bottom: 3px solid #1c1a1a;
        box-shadow: inset 0 -1px #fff;
        color: #454545;
    }

    .status-tools {
        display: flex;
        align-items: center;
        gap: 9px;
        width: 450px;
        height: 30px;
        padding-left: 17px;
        border-left: 1px solid #8e9398;
    }

    .status-tools .tool {
        width: 26px;
        height: 24px;
    }

    .status-tools input {
        flex: 1;
        height: 28px;
        margin-left: 1px;
        border: 1px solid #b4bac4;
        background: #fff;
    }
</style>
